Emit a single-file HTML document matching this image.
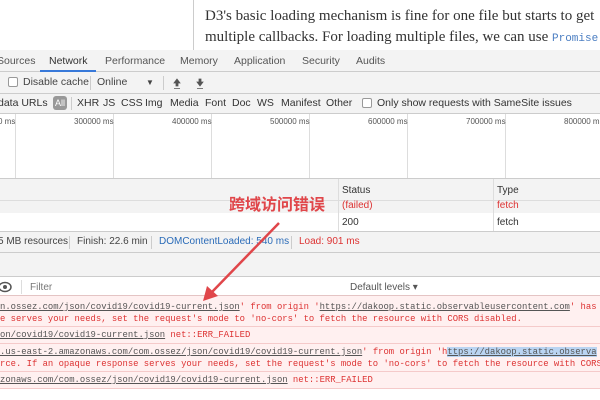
<!DOCTYPE html>
<html><head><meta charset="utf-8"><style>
*{margin:0;padding:0;box-sizing:border-box}
body{width:600px;height:400px;overflow:hidden;background:#fff;position:relative;font-family:"Liberation Sans","Noto Sans CJK SC",sans-serif;font-size:10.5px;color:#333}
.a{position:absolute;white-space:nowrap}
.mono{font-family:"Liberation Mono",monospace;font-size:8.9px;color:#d33;letter-spacing:0}
.u{text-decoration:underline;color:#555}
.vl{position:absolute;width:1px;background:#ddd}
.f{position:absolute;top:97px;color:#333}
</style></head><body>
<div class="vl" style="left:193px;top:0;height:50px;background:#ccc"></div>
<div class="a" style="left:205px;top:8px;font-family:'Liberation Serif',serif;font-size:15px;color:#333">D3's basic loading mechanism is fine for one file but starts to get</div>
<div class="a" style="left:205px;top:29px;font-family:'Liberation Serif',serif;font-size:15px;color:#333">multiple callbacks. For loading multiple files, we can use <span style="font-family:'Liberation Mono',monospace;font-size:11px;color:#4b7ec2">Promise</span></div>

<div class="a" style="left:0;top:50px;width:600px;height:22px;background:#f3f3f3;border-bottom:1px solid #ccc"></div>
<div class="a" style="top:55px;left:-3px;color:#555">Sources</div>
<div class="a" style="top:55px;left:49px;color:#333">Network</div>
<div class="a" style="left:40px;top:70px;width:56px;height:2px;background:#3879d9"></div>
<div class="a" style="top:55px;left:105px;color:#555">Performance</div>
<div class="a" style="top:55px;left:180px;color:#555">Memory</div>
<div class="a" style="top:55px;left:234px;color:#555">Application</div>
<div class="a" style="top:55px;left:302px;color:#555">Security</div>
<div class="a" style="top:55px;left:356px;color:#555">Audits</div>

<div class="a" style="left:0;top:72px;width:600px;height:22px;background:#f3f3f3;border-bottom:1px solid #ccc"></div>
<div class="a" style="left:8px;top:77px;width:10px;height:10px;border:1px solid #999;border-radius:2px;background:#fff"></div>
<div class="a" style="top:76px;left:23px;color:#444;font-size:10.5px">Disable cache</div>
<div class="vl" style="left:90px;top:76px;height:14px;background:#ccc"></div>
<div class="a" style="top:76px;left:97px;color:#444;font-size:10.5px">Online</div>
<div class="a" style="top:76px;left:146px;color:#444;font-size:8px;line-height:14px">▼</div>
<div class="vl" style="left:163px;top:76px;height:14px;background:#ccc"></div>
<svg class="a" style="left:170px;top:75px" width="40" height="16"><path d="M7 4 L4 8 H6 V11 H8 V8 H10 Z M4 13.5 H10" fill="#555" stroke="#555" stroke-width="0.8"/><path d="M29 4 V7 H27 L30 11 L33 7 H31 V4 Z M27 13.5 H33" fill="#555" stroke="#555" stroke-width="0.8"/></svg>

<div class="a" style="left:0;top:94px;width:600px;height:20px;background:#f3f3f3;border-bottom:1px solid #ccc"></div>
<div class="f" style="left:-2px">data URLs</div>
<div class="a" style="top:96px;left:53px;width:14px;height:14px;background:#999;border-radius:3px;color:#fff;font-size:9px;text-align:center;line-height:14px">All</div>
<div class="vl" style="left:71px;top:97px;height:13px;background:#ccc"></div>
<div class="f" style="left:77px">XHR</div>
<div class="f" style="left:103px">JS</div>
<div class="f" style="left:121px">CSS</div>
<div class="f" style="left:145px">Img</div>
<div class="f" style="left:170px">Media</div>
<div class="f" style="left:205px">Font</div>
<div class="f" style="left:232px">Doc</div>
<div class="f" style="left:257px">WS</div>
<div class="f" style="left:281px">Manifest</div>
<div class="f" style="left:326px">Other</div>
<div class="a" style="left:362px;top:98px;width:10px;height:10px;border:1px solid #999;border-radius:2px;background:#fff"></div>
<div class="f" style="left:377px">Only show requests with SameSite issues</div>

<div class="vl" style="left:15px;top:114px;height:64px"></div>
<div class="vl" style="left:113px;top:114px;height:64px"></div>
<div class="vl" style="left:211px;top:114px;height:64px"></div>
<div class="vl" style="left:309px;top:114px;height:64px"></div>
<div class="vl" style="left:407px;top:114px;height:64px"></div>
<div class="vl" style="left:505px;top:114px;height:64px"></div>
<div class="a" style="top:117px;left:-2px;font-size:8px;color:#555">0 ms</div>
<div class="a" style="top:117px;left:74px;font-size:8px;color:#555">300000 ms</div>
<div class="a" style="top:117px;left:172px;font-size:8px;color:#555">400000 ms</div>
<div class="a" style="top:117px;left:270px;font-size:8px;color:#555">500000 ms</div>
<div class="a" style="top:117px;left:368px;font-size:8px;color:#555">600000 ms</div>
<div class="a" style="top:117px;left:466px;font-size:8px;color:#555">700000 ms</div>
<div class="a" style="top:117px;left:564px;font-size:8px;color:#555">800000 ms</div>

<div class="a" style="left:0;top:178px;width:600px;height:22px;background:#f3f3f3;border-top:1px solid #ccc"></div>
<div class="a" style="left:0;top:200px;width:600px;height:13px;background:#f3f3f3;border-top:1px solid #ddd"></div>
<div class="vl" style="left:338px;top:179px;height:52px"></div>
<div class="vl" style="left:493px;top:179px;height:52px"></div>
<div class="a" style="top:185px;left:342px;color:#333;font-size:10px">Status</div>
<div class="a" style="top:185px;left:497px;color:#333;font-size:10px">Type</div>
<div class="a" style="top:200px;left:342px;color:#d33;font-size:10px">(failed)</div>
<div class="a" style="top:200px;left:497px;color:#d33;font-size:10px">fetch</div>
<div class="a" style="top:217px;left:342px;color:#333;font-size:10px">200</div>
<div class="a" style="top:217px;left:497px;color:#333;font-size:10px">fetch</div>

<div class="a" style="left:0;top:231px;width:600px;height:22px;background:#f3f3f3;border-top:1px solid #ccc;border-bottom:1px solid #ccc"></div>
<div class="a" style="top:236px;left:-2px;color:#444;font-size:10px">5 MB resources</div>
<div class="vl" style="left:69px;top:236px;height:13px;background:#ccc"></div>
<div class="a" style="top:236px;left:77px;color:#444;font-size:10px">Finish: 22.6 min</div>
<div class="vl" style="left:151px;top:236px;height:13px;background:#ccc"></div>
<div class="a" style="top:236px;left:159px;color:#2a6bb8;font-size:10px">DOMContentLoaded: 540 ms</div>
<div class="vl" style="left:291px;top:236px;height:13px;background:#ccc"></div>
<div class="a" style="top:236px;left:299px;color:#d33;font-size:10px">Load: 901 ms</div>

<div class="a" style="left:0;top:253px;width:600px;height:24px;background:#f3f3f3;border-bottom:1px solid #ccc"></div>
<div class="a" style="left:0;top:277px;width:600px;height:19px;background:#fff;border-bottom:1px solid #e4c4c4"></div>
<svg class="a" style="left:0;top:281px" width="14" height="12"><ellipse cx="5" cy="6" rx="6" ry="4.5" fill="none" stroke="#555" stroke-width="1.5"/><circle cx="5" cy="6" r="2" fill="#555"/></svg>
<div class="vl" style="left:21px;top:280px;height:14px"></div>
<div class="a" style="top:282px;left:30px;color:#777;font-size:10px">Filter</div>
<div class="a" style="top:282px;left:350px;color:#555;font-size:10px">Default levels ▾</div>

<div class="a" style="left:0;top:296px;width:600px;height:92px;background:#fff0f0"></div>
<div class="a" style="left:0;top:326px;width:600px;height:1px;background:#f5caca"></div>
<div class="a" style="left:0;top:343px;width:600px;height:1px;background:#f5caca"></div>
<div class="a" style="left:0;top:371px;width:600px;height:1px;background:#f5caca"></div>
<div class="a" style="left:0;top:388px;width:600px;height:1px;background:#f5caca"></div>
<div class="a mono" style="top:302px;left:0"><span class="u">n.ossez.com/json/covid19/covid19-current.json</span>' from origin '<span class="u">https://dakoop.static.observableusercontent.com</span>' has</div>
<div class="a mono" style="top:314px;left:0">e serves your needs, set the request's mode to 'no-cors' to fetch the resource with CORS disabled.</div>
<div class="a mono" style="top:330px;left:0"><span class="u">on/covid19/covid19-current.json</span> net::ERR_FAILED</div>
<div class="a mono" style="top:347px;left:0"><span class="u">.us-east-2.amazonaws.com/com.ossez/json/covid19/covid19-current.json</span>' from origin 'h<span class="u" style="background:#b9d4f2">ttps://dakoop.static.observa</span></div>
<div class="a mono" style="top:359px;left:0">rce. If an opaque response serves your needs, set the request's mode to 'no-cors' to fetch the resource with CORS</div>
<div class="a mono" style="top:375px;left:0"><span class="u">zonaws.com/com.ossez/json/covid19/covid19-current.json</span> net::ERR_FAILED</div>

<div class="a" style="top:193px;left:229px;font-size:16px;font-weight:bold;color:#e0464a;font-family:'Noto Sans CJK SC',sans-serif;line-height:20px">跨域访问错误</div>
<svg class="a" style="left:0;top:0" width="600" height="400"><line x1="279" y1="223" x2="212" y2="292" stroke="#e0464a" stroke-width="2.5"/><polygon points="203,301 207,286 218,296" fill="#e0464a"/></svg>
</body></html>
